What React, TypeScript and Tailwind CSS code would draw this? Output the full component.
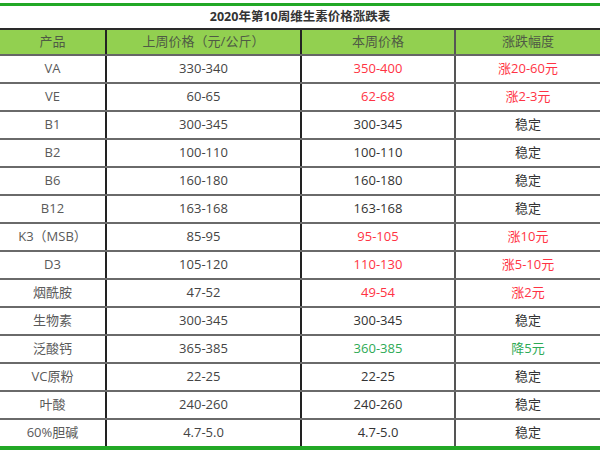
type Row = {
  name: string;
  last: string;
  now: string;
  change: string;
  tone: "up" | "down" | "flat";
};

const rows: Row[] = [
  { name: "VA", last: "330-340", now: "350-400", change: "涨20-60元", tone: "up" },
  { name: "VE", last: "60-65", now: "62-68", change: "涨2-3元", tone: "up" },
  { name: "B1", last: "300-345", now: "300-345", change: "稳定", tone: "flat" },
  { name: "B2", last: "100-110", now: "100-110", change: "稳定", tone: "flat" },
  { name: "B6", last: "160-180", now: "160-180", change: "稳定", tone: "flat" },
  { name: "B12", last: "163-168", now: "163-168", change: "稳定", tone: "flat" },
  { name: "K3（MSB）", last: "85-95", now: "95-105", change: "涨10元", tone: "up" },
  { name: "D3", last: "105-120", now: "110-130", change: "涨5-10元", tone: "up" },
  { name: "烟酰胺", last: "47-52", now: "49-54", change: "涨2元", tone: "up" },
  { name: "生物素", last: "300-345", now: "300-345", change: "稳定", tone: "flat" },
  { name: "泛酸钙", last: "365-385", now: "360-385", change: "降5元", tone: "down" },
  { name: "VC原粉", last: "22-25", now: "22-25", change: "稳定", tone: "flat" },
  { name: "叶酸", last: "240-260", now: "240-260", change: "稳定", tone: "flat" },
  { name: "60%胆碱", last: "4.7-5.0", now: "4.7-5.0", change: "稳定", tone: "flat" },
];

const toneClass = {
  up: "text-[#ff3344]",
  down: "text-[#2eaa55]",
  flat: "text-[#333333]",
};

export default function App() {
  return (
    <div
      className="w-[600px] h-[450px] overflow-hidden bg-white text-[13px]"
      style={{ fontFamily: '"Open Sans", "Noto Sans CJK SC", sans-serif' }}
    >
      <div className="mt-[3px] h-[3px] bg-[#22a826]" />
      <div className="flex h-[22px] items-center justify-center text-[12.5px] font-bold text-[#333333]">
        2020年第10周维生素价格涨跌表
      </div>
      <div className="grid h-[28px] grid-cols-[107px_195px_154px_144px] border-y-2 border-t-[#2a2a2a] border-b-[#666666] bg-[#92d050] text-[#4f5a45]">
        <div className="flex items-center justify-center border-r-2 border-[#222222]">产品</div>
        <div className="flex items-center justify-center border-r-2 border-[#222222]">上周价格（元/公斤）</div>
        <div className="flex items-center justify-center border-r-2 border-[#555555]">本周价格</div>
        <div className="flex items-center justify-center">涨跌幅度</div>
      </div>
      {rows.map((row) => (
        <div
          key={row.name}
          className="grid h-[28px] grid-cols-[107px_195px_154px_144px] border-b-2 border-[#6a6a6a]"
        >
          <div className="flex items-center justify-center border-r-2 border-[#222222] text-[#5a5a5a]">
            {row.name}
          </div>
          <div className="flex items-center justify-center border-r-2 border-[#222222] text-[#444444]">
            {row.last}
          </div>
          <div className={`flex items-center justify-center border-r-2 border-[#555555] ${toneClass[row.tone]}`}>
            {row.now}
          </div>
          <div className={`flex items-center justify-center ${toneClass[row.tone]}`}>{row.change}</div>
        </div>
      ))}
      <div className="-mt-[2px] h-[4px] bg-[#22a826]" />
    </div>
  );
}
